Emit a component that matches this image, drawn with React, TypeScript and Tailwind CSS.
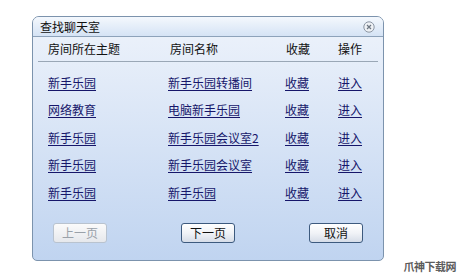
import React from "react";

const rows = [
  ["新手乐园", "新手乐园转播间"],
  ["网络教育", "电脑新手乐园"],
  ["新手乐园", "新手乐园会议室2"],
  ["新手乐园", "新手乐园会议室"],
  ["新手乐园", "新手乐园"],
];

function Btn({ children, disabled }: { children: React.ReactNode; disabled?: boolean }) {
  return (
    <button
      className={
        disabled
          ? "h-[20px] w-[54px] rounded-[3px] border border-[#b9c3cf] bg-gradient-to-b from-[#fbfbfb] to-[#e6e8ec] text-[12px] leading-none text-[#9aa1a9]"
          : "h-[20px] w-[54px] rounded-[3px] border border-[#3d5a7e] bg-gradient-to-b from-[#ffffff] via-[#f1f3f7] to-[#d6dde8] text-[12px] leading-none text-[#111]"
      }
    >
      {children}
    </button>
  );
}

export default function App() {
  return (
    <div
      className="relative h-[275px] w-[458px] bg-white"
      style={{ fontFamily: '"Noto Sans CJK SC", "Liberation Sans", sans-serif' }}
    >
      <div className="absolute left-[32px] top-[16px] flex h-[245px] w-[352px] flex-col overflow-hidden rounded-t-[7px] rounded-b-[5px] border border-[#7c93ad] bg-gradient-to-b from-[#eef3fb] to-[#c0d4f0]">
        <div className="flex h-[20px] shrink-0 items-center justify-between border-b border-[#8da2ba] bg-gradient-to-b from-[#f4f8fd] to-[#d5e3f5] pl-[7px] pr-[8px]">
          <span className="text-[12px] leading-none text-[#111]">查找聊天室</span>
          <svg width="12" height="12" viewBox="0 0 12 12">
            <circle cx="6" cy="6" r="5.2" fill="#eef1f5" stroke="#8b95a3" strokeWidth="1" />
            <path d="M4 4 L8 8 M8 4 L4 8" stroke="#6d7682" strokeWidth="1.2" />
          </svg>
        </div>
        <div className="flex flex-1 flex-col px-[5px]">
          <div className="flex h-[25px] shrink-0 items-center border-b border-[#9aa7b6] pl-[10px] text-[12px] text-[#111]">
            <div className="w-[122px]">房间所在主题</div>
            <div className="w-[116px]">房间名称</div>
            <div className="w-[52px]">收藏</div>
            <div>操作</div>
          </div>
          <div className="mt-[7px] flex flex-col">
            {rows.map((r, i) => (
              <div key={i} className="flex h-[27.5px] items-center pl-[10px] text-[12px] text-[#16166a]">
                <div className="w-[120px]"><a className="underline underline-offset-2">{r[0]}</a></div>
                <div className="w-[117px]"><a className="underline underline-offset-2">{r[1]}</a></div>
                <div className="w-[53px]"><a className="underline underline-offset-2">收藏</a></div>
                <div><a className="underline underline-offset-2">进入</a></div>
              </div>
            ))}
          </div>
          <div className="mt-[16px] flex justify-between px-[15px]">
            <Btn disabled>上一页</Btn>
            <Btn>下一页</Btn>
            <Btn>取消</Btn>
          </div>
        </div>
      </div>
      <div className="absolute right-[2px] top-[261px] text-[11px] font-bold leading-none tracking-[-0.5px] text-[#5c5c5c]">
        爪神下载网
      </div>
    </div>
  );
}
